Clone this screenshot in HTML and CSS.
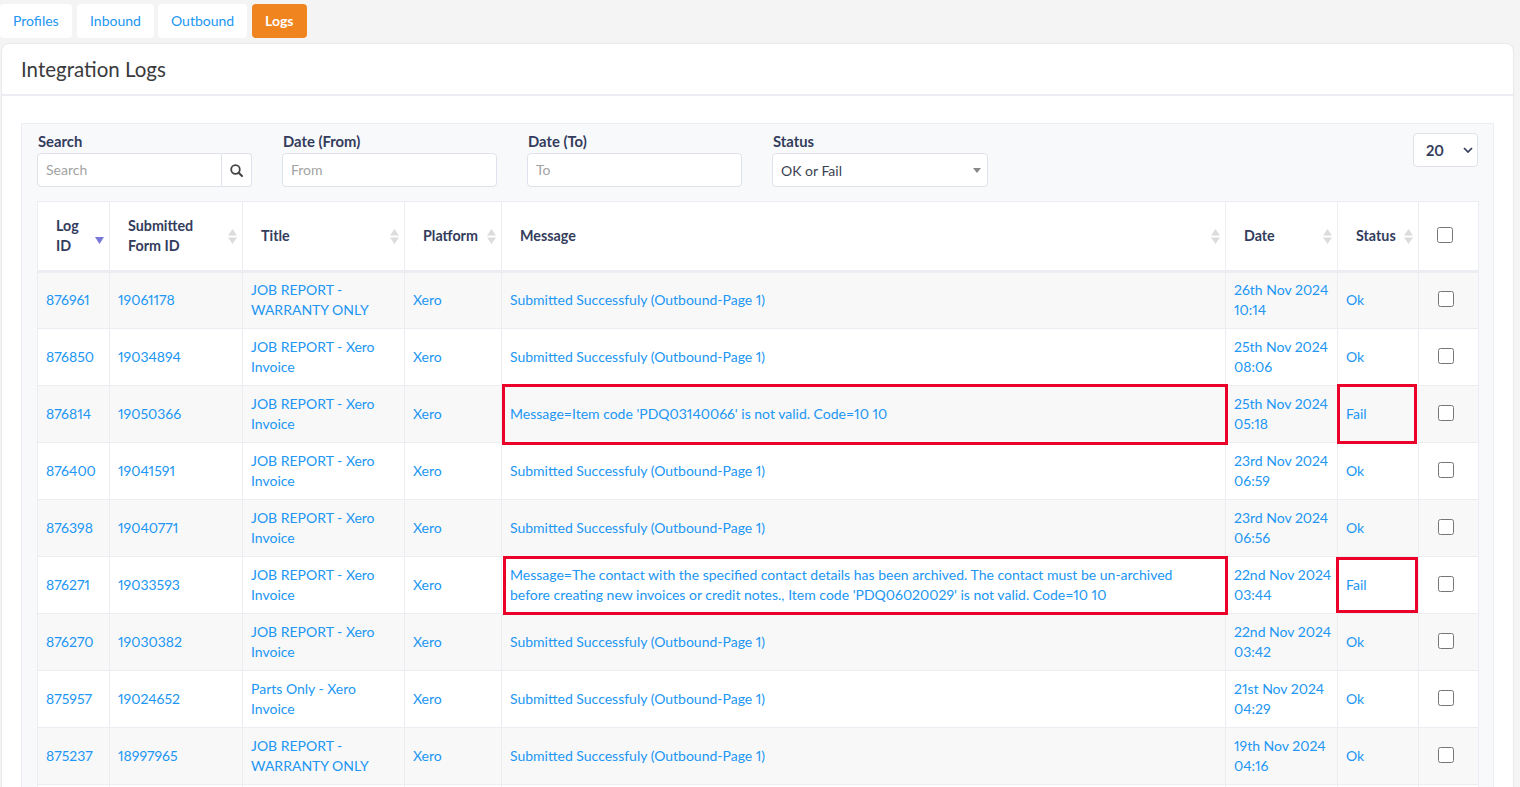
FILE: index.html
```html
<!DOCTYPE html>
<html lang="en">
<head>
<meta charset="utf-8">
<title>Integration Logs</title>
<link rel="stylesheet" href="styles.css">
</head>
<body>
<nav class="tabs">
  <a class="tab">Profiles</a>
  <a class="tab tab-b">Inbound</a>
  <a class="tab tab-c">Outbound</a>
  <a class="tab tab-active">Logs</a>
</nav>
<main class="card">
  <h1 class="card-title">Integration Logs</h1>
  <div class="card-body">
    <section class="panel">
      <div class="filters">
        <div class="field">
          <label class="label">Search</label>
          <div class="input-group">
            <div class="input input-grow">Search</div>
            <div class="search-btn">
              <svg width="13" height="13" viewBox="0 0 13 13"><circle cx="5.500" cy="5.500" r="4.300" fill="none" stroke="#444" stroke-width="1.800"/><path d="M8.700 8.700 12 12" stroke="#444" stroke-width="2" stroke-linecap="round"/></svg>
            </div>
          </div>
        </div>
        <div class="field">
          <label class="label">Date (From)</label>
          <div class="input">From</div>
        </div>
        <div class="field">
          <label class="label">Date (To)</label>
          <div class="input">To</div>
        </div>
        <div class="field">
          <label class="label">Status</label>
          <div class="input select-status">OK or Fail<span class="caret"></span></div>
        </div>
        <div class="page-size">20
          <svg width="10" height="6" viewBox="0 0 10 6"><path d="M1 1l4 4 4-4" fill="none" stroke="#333c5c" stroke-width="1.700"/></svg>
        </div>
      </div>
      <table class="logs">
        <colgroup>
          <col class="c1"><col class="c2"><col class="c3"><col class="c4"><col class="c5"><col class="c6"><col class="c7"><col class="c8">
        </colgroup>
        <thead>
          <tr>
            <th><div class="th"><span class="th-log">Log<br>ID</span><svg class="sort-active" width="9" height="7" viewBox="0 0 9 7"><path d="M0 0h9L4.500 7z" fill="#7878d8"/></svg></div></th>
            <th><div class="th"><span>Submitted<br>Form ID</span><svg width="9" height="15" viewBox="0 0 9 15"><path d="M4.500 0 9 6.500H0zM0 8.500h9L4.500 15z" fill="#dcdcdc"/></svg></div></th>
            <th><div class="th"><span>Title</span><svg width="9" height="15" viewBox="0 0 9 15"><path d="M4.500 0 9 6.500H0zM0 8.500h9L4.500 15z" fill="#dcdcdc"/></svg></div></th>
            <th><div class="th"><span>Platform</span><svg width="9" height="15" viewBox="0 0 9 15"><path d="M4.500 0 9 6.500H0zM0 8.500h9L4.500 15z" fill="#dcdcdc"/></svg></div></th>
            <th><div class="th"><span>Message</span><svg width="9" height="15" viewBox="0 0 9 15"><path d="M4.500 0 9 6.500H0zM0 8.500h9L4.500 15z" fill="#dcdcdc"/></svg></div></th>
            <th><div class="th"><span>Date</span><svg width="9" height="15" viewBox="0 0 9 15"><path d="M4.500 0 9 6.500H0zM0 8.500h9L4.500 15z" fill="#dcdcdc"/></svg></div></th>
            <th><div class="th"><span>Status</span><svg width="9" height="15" viewBox="0 0 9 15"><path d="M4.500 0 9 6.500H0zM0 8.500h9L4.500 15z" fill="#dcdcdc"/></svg></div></th>
            <th class="th-check"><input type="checkbox"></th>
          </tr>
        </thead>
        <tbody>
          <tr><td>876961</td><td>19061178</td><td>JOB REPORT -<br>WARRANTY ONLY</td><td>Xero</td><td>Submitted Successfuly (Outbound-Page 1)</td><td>26th Nov 2024<br>10:14</td><td>Ok</td><td class="td-check"><input type="checkbox"></td></tr>
          <tr><td>876850</td><td>19034894</td><td>JOB REPORT - Xero<br>Invoice</td><td>Xero</td><td>Submitted Successfuly (Outbound-Page 1)</td><td>25th Nov 2024<br>08:06</td><td>Ok</td><td class="td-check"><input type="checkbox"></td></tr>
          <tr><td>876814</td><td>19050366</td><td>JOB REPORT - Xero<br>Invoice</td><td>Xero</td><td class="marked">Message=Item code 'PDQ03140066' is not valid. Code=10 10<span class="mark mark-msg-a"></span></td><td>25th Nov 2024<br>05:18</td><td class="marked">Fail<span class="mark mark-st-a"></span></td><td class="td-check"><input type="checkbox"></td></tr>
          <tr><td>876400</td><td>19041591</td><td>JOB REPORT - Xero<br>Invoice</td><td>Xero</td><td>Submitted Successfuly (Outbound-Page 1)</td><td>23rd Nov 2024<br>06:59</td><td>Ok</td><td class="td-check"><input type="checkbox"></td></tr>
          <tr><td>876398</td><td>19040771</td><td>JOB REPORT - Xero<br>Invoice</td><td>Xero</td><td>Submitted Successfuly (Outbound-Page 1)</td><td>23rd Nov 2024<br>06:56</td><td>Ok</td><td class="td-check"><input type="checkbox"></td></tr>
          <tr><td>876271</td><td>19033593</td><td>JOB REPORT - Xero<br>Invoice</td><td>Xero</td><td class="marked">Message=The contact with the specified contact details has been archived. The contact must be un-archived<br>before creating new invoices or credit notes., Item code 'PDQ06020029' is not valid. Code=10 10<span class="mark mark-msg-b"></span></td><td>22nd Nov 2024<br>03:44</td><td class="marked">Fail<span class="mark mark-st-b"></span></td><td class="td-check"><input type="checkbox"></td></tr>
          <tr><td>876270</td><td>19030382</td><td>JOB REPORT - Xero<br>Invoice</td><td>Xero</td><td>Submitted Successfuly (Outbound-Page 1)</td><td>22nd Nov 2024<br>03:42</td><td>Ok</td><td class="td-check"><input type="checkbox"></td></tr>
          <tr><td>875957</td><td>19024652</td><td>Parts Only - Xero<br>Invoice</td><td>Xero</td><td>Submitted Successfuly (Outbound-Page 1)</td><td>21st Nov 2024<br>04:29</td><td>Ok</td><td class="td-check"><input type="checkbox"></td></tr>
          <tr><td>875237</td><td>18997965</td><td>JOB REPORT -<br>WARRANTY ONLY</td><td>Xero</td><td>Submitted Successfuly (Outbound-Page 1)</td><td>19th Nov 2024<br>04:16</td><td>Ok</td><td class="td-check"><input type="checkbox"></td></tr>
          <tr><td>&nbsp;<br>&nbsp;</td><td></td><td></td><td></td><td></td><td></td><td></td><td></td></tr>
        </tbody>
      </table>
    </section>
  </div>
</main>
</body>
</html>
```

FILE: styles.css
```css
* { box-sizing: border-box; }
html, body { height: 787px; overflow: hidden; }
body {
  margin: 0;
  background: #f4f4f5;
  font-family: "Lato", "Liberation Sans", sans-serif;
  font-size: 14px;
  font-feature-settings: "pnum" 1;
  font-variant-numeric: proportional-nums;
  color: #333c5c;
}
.tabs { display: flex; padding-top: 4px; height: 43px; }
.tab {
  height: 34px;
  line-height: 34px;
  background: #fff;
  color: #2196f3;
  border-radius: 4px;
  padding: 0 13px;
  width: 72px;
  margin-right: 5px;
  white-space: nowrap;
}
.tab-b { width: 77px; margin-right: 4px; }
.tab-c { width: 89px; margin-right: 5px; }
.tab-active { width: 55px; background: #f0851f; color: #fff; font-weight: 700; }
.card {
  margin-left: 1px;
  width: 1513px;
  height: 760px;
  background: #fff;
  border: 1px solid #e9e9ea;
  border-radius: 8px 8px 0 0;
}
.card-title {
  margin: 0;
  height: 52px;
  line-height: 51px;
  padding-left: 19px;
  font-size: 20.500px;
  font-weight: 400;
  color: #3a3a3c;
  border-bottom: 2px solid #ebedf2;
}
.card-body { padding: 27px 19px 0; }
.panel {
  background: #f8f9fb;
  border: 1px solid #ebedf2;
  padding: 9px 15px 0;
}
.filters { display: flex; gap: 30px; height: 54px; margin-bottom: 14px; }
.field { width: 215px; }
.field:nth-child(4) { width: 216px; }
.label {
  display: block;
  height: 20px;
  line-height: 17px;
  font-size: 14.800px;
  font-weight: 700;
  padding-left: 1px;
  color: #333c5c;
}
.input {
  height: 34px;
  line-height: 31px;
  background: #fff;
  border: 1px solid #dfe2ea;
  border-radius: 4px;
  padding: 0 8px;
  color: #a3a3a3;
}
.input-group { display: flex; }
.input-grow { flex: 1; border-radius: 4px 0 0 4px; }
.search-btn {
  width: 30px;
  height: 34px;
  background: #fff;
  border: 1px solid #dfe2ea;
  border-left: 0;
  border-radius: 0 4px 4px 0;
  display: flex;
  align-items: center;
  justify-content: center;
}
.select-status {
  display: flex;
  align-items: center;
  justify-content: space-between;
  color: #3a3f52;
  padding-right: 6px;
}
.caret {
  width: 0;
  height: 0;
  border-left: 4px solid transparent;
  border-right: 4px solid transparent;
  border-top: 5px solid #888;
}
.page-size {
  margin-left: auto;
  width: 65px;
  height: 34px;
  background: #fff;
  border: 1px solid #dfe2ea;
  border-radius: 4px;
  padding: 0 4px 0 12px;
  display: flex;
  align-items: center;
  justify-content: space-between;
  font-size: 14.500px;
  font-weight: 700;
}
.logs {
  width: 1441px;
  border-collapse: collapse;
  table-layout: fixed;
  background: #fff;
}
.c1 { width: 72px; }
.c2 { width: 133px; }
.c3 { width: 162px; }
.c4 { width: 97px; }
.c5 { width: 724px; }
.c6 { width: 112px; }
.c7 { width: 81px; }
.c8 { width: 60px; }
.logs th {
  height: 70px;
  padding: 0 5px 0 18px;
  border: 1px solid #ebedf2;
  border-bottom: 3px solid #ebedf2;
  font-size: 14.300px;
  font-weight: 700;
  text-align: left;
  line-height: 20px;
  color: #333c5c;
}
.th { display: flex; align-items: center; justify-content: space-between; }
.sort-active { align-self: flex-end; margin-bottom: 12px; }
.logs td {
  height: 57px;
  padding: 0 8px;
  border: 1px solid #ebedf2;
  line-height: 20px;
  color: #2196f3;
  white-space: nowrap;
}
.logs tbody tr:first-child td { padding-bottom: 2px; }
.logs tbody tr:nth-child(odd) { background: #f8f8f9; }
.logs input { display: block; width: 16px; height: 16px; margin: 0; }
.logs .th-check { padding: 0 0 3px 18px; }
.logs .td-check { padding: 0 0 2px 19px; }
.logs tbody tr:first-child .td-check { padding-bottom: 4px; }
.marked { position: relative; }
.mark { position: absolute; border: 3px solid #ea0029; }
.mark-msg-a { left: 0; right: -3px; top: -2px; bottom: -3px; }
.mark-msg-b { left: 1px; right: -3px; top: -1px; bottom: -2px; }
.mark-st-a { left: -1px; right: 1px; top: -2px; bottom: -2px; }
.mark-st-b { left: -2px; right: 0; top: 0; bottom: 0; }
```
